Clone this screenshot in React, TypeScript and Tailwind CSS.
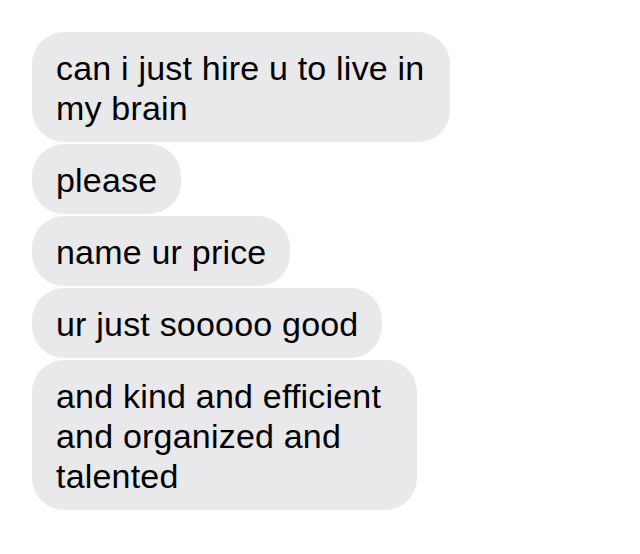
const messages = [
  { text: "can i just hire u to live in my brain", size: "w-[418px] pr-[18px]" },
  { text: "please", size: "pr-[24px]" },
  { text: "name ur price", size: "pr-[24px]" },
  { text: "ur just sooooo good", size: "pr-[24px]" },
  { text: "and kind and efficient and organized and talented", size: "w-[385px] pr-[18px]" },
];

function Bubble({ text, size }: { text: string; size: string }) {
  return (
    <div
      className={`${size} rounded-[32px] bg-[#e9e9eb] pl-[24px] pt-[16px] pb-[14px] text-[34px] leading-[40px] tracking-[0.2px] text-black`}
    >
      {text}
    </div>
  );
}

export default function App() {
  return (
    <div
      className="flex h-[554px] w-[640px] flex-col items-start gap-[2px] bg-white pl-[32px] pt-[32px]"
      style={{ fontFamily: '"Liberation Sans", Arial, sans-serif' }}
    >
      {messages.map((m, i) => (
        <Bubble key={i} text={m.text} size={m.size} />
      ))}
    </div>
  );
}
